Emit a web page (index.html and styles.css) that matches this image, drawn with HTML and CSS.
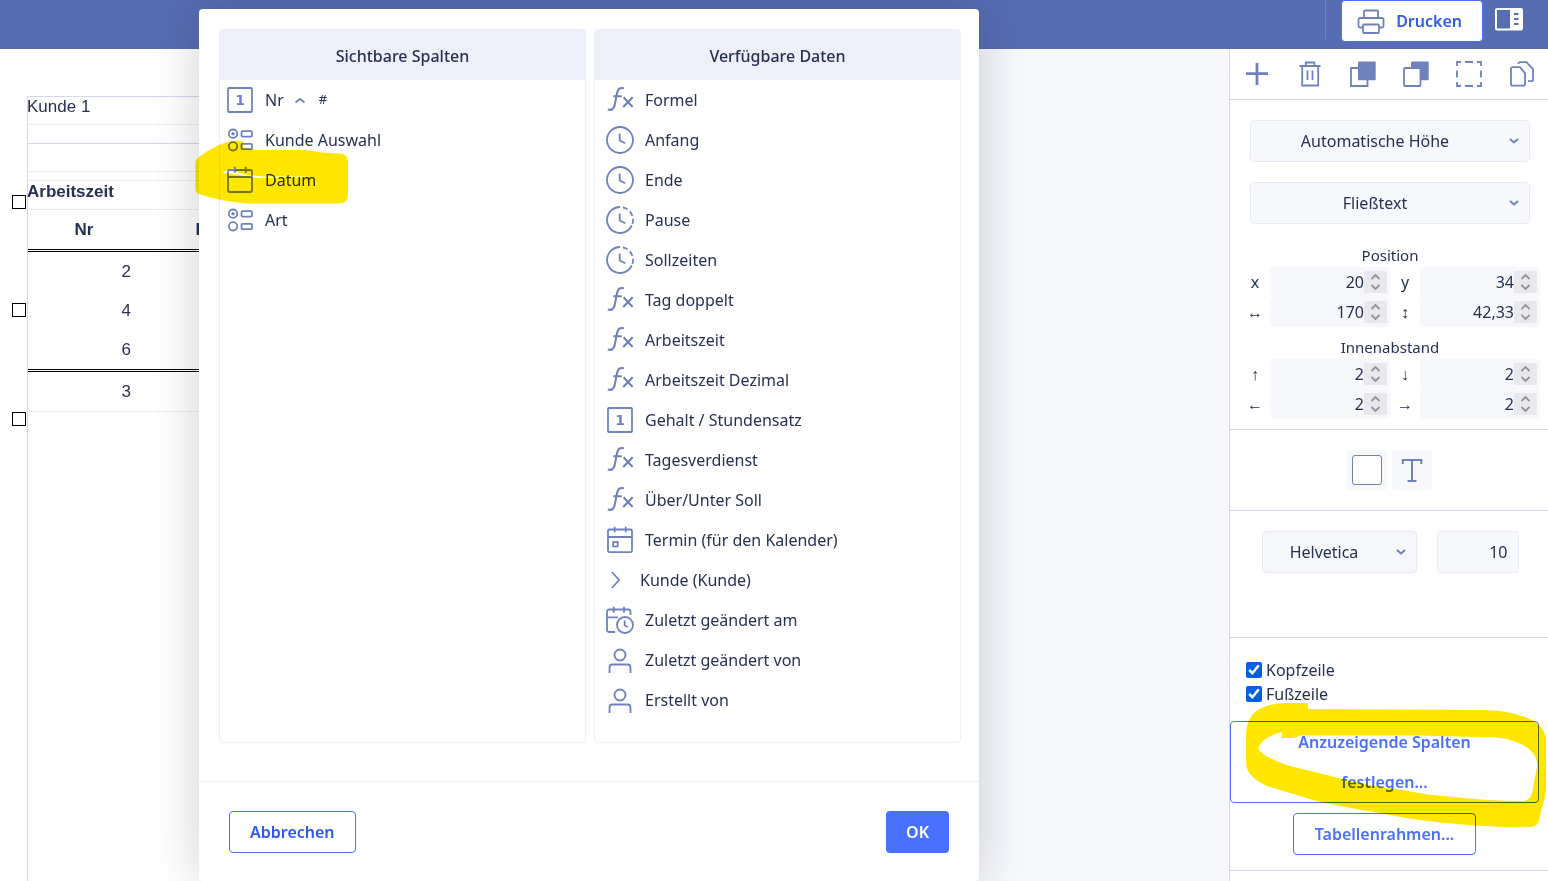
FILE: index.html
```html
<!DOCTYPE html>
<html lang="de">
<head>
    <meta charset="UTF-8">
    <meta name="viewport" content="width=device-width, initial-scale=1.0">
    <title>Druckvorlage</title>
    <link rel="stylesheet" href="styles.css">
</head>
<body>
    <!-- Icons -->
    <svg class="sprite" aria-hidden="true">
        <symbol id="i-number" viewBox="0 0 28 28"><rect x="2" y="2" width="24" height="24" rx="1"/><text x="14" y="19">1</text></symbol>
        <symbol id="i-choice" viewBox="0 0 28 28"><circle cx="7" cy="7.7" r="4.2"/><circle class="solid" cx="7" cy="7.7" r="1.7"/><circle cx="7" cy="20.3" r="4.2"/><rect x="15.5" y="5.2" width="10.5" height="5.4" rx="1"/><rect x="15.5" y="17.8" width="10.5" height="5.4" rx="1"/></symbol>
        <symbol id="i-date" viewBox="0 0 28 28"><rect x="2" y="4" width="24" height="22" rx="1.5"/><path d="M2 11h24M8.7 .8v6M19.7 .8v6"/></symbol>
        <symbol id="i-event" viewBox="0 0 28 28"><rect x="2" y="3.5" width="24" height="22.7" rx="1.5"/><path d="M2 11h24M8.7 .8v5.5M19.7 .8v5.5"/><rect x="7.2" y="16" width="4.5" height="4.5"/></symbol>
        <symbol id="i-formula" viewBox="0 0 28 28"><path stroke-width="2.1" d="M1.8 23.5q5.500 1.600 6.800-4.200L11.200 6.500q1-5.500 6.800-4.300M7.300 10.300h8.500M17.600 11.300l9 9.700M26.700 11.300l-9.400 9.700"/></symbol>
        <symbol id="i-clock" viewBox="0 0 28 28"><circle cx="14" cy="14" r="13"/><path d="M13.700 7.500v7l5.500 2.800"/></symbol>
        <symbol id="i-duration" viewBox="0 0 28 28"><path d="M14 1A13 13 0 1 0 25.800 19.500"/><path d="M14 1A13 13 0 0 1 25.800 19.500" stroke-dasharray="0 3 5 3 5 3 5 4"/><path d="M13.700 7.500v7l5.500 2.800"/></symbol>
        <symbol id="i-next" viewBox="0 0 23 28"><path d="M6 6l7 8-7 8"/></symbol>
        <symbol id="i-changed" viewBox="0 0 28 28"><path d="M9 26H3a2 2 0 0 1-2-2V5.500A2 2 0 0 1 3 3.500h19.500a2 2 0 0 1 2 2V9M1 11.300h11M7.700 .800v6M18 .800v6"/><circle cx="19" cy="19" r="8"/><path d="M18.700 14.500v5l3 1.500"/></symbol>
        <symbol id="i-user" viewBox="0 0 28 28"><circle cx="14" cy="9" r="5.500"/><path d="M3.500 27v-5.500a3 3 0 0 1 3-3h15a3 3 0 0 1 3 3V27"/></symbol>
        <symbol id="i-plus" viewBox="0 0 28 28"><path stroke-width="2.800" d="M14 3v22M3 13.700h22"/></symbol>
        <symbol id="i-trash" viewBox="0 0 28 28"><path d="M3.500 6h21M9.800 6V2.500h8.600V6M6.200 7v18.500h16V7M11.500 10.500V20M16.500 10.500V20"/></symbol>
        <symbol id="i-front" viewBox="0 0 28 28"><path d="M9 8H2v18h16.500v-6"/><rect class="solid" x="9" y="1.500" width="17.700" height="18.700" rx="1"/></symbol>
        <symbol id="i-back" viewBox="0 0 28 28"><rect class="solid" x="9" y="1.500" width="17.700" height="18.700" rx="1"/><rect class="paper-fill" x="2" y="8" width="16.500" height="18" rx="1"/></symbol>
        <symbol id="i-select" viewBox="0 0 28 28"><path d="M2 6V2h4M10 2h8M22 2h4v4M26 10.500v7M26 22v4h-4M18 26h-8M6 26H2v-4M2 17.500v-7"/></symbol>
        <symbol id="i-copy" viewBox="0 0 28 28"><path d="M4.500 7.200h7.500l5 6v11a1.500 1.500 0 0 1-1.500 1.500h-11A1.500 1.500 0 0 1 3 24.200V8.700a1.500 1.500 0 0 1 1.500-1.500zM10.500 4V3.700a1.500 1.500 0 0 1 1.500-1.500h6.500l6.500 7v10.500a1.500 1.500 0 0 1-1.500 1.500H20"/></symbol>
        <symbol id="i-print" viewBox="0 0 28 28"><path d="M6 20.500H3A1.500 1.500 0 0 1 1.500 19v-6.500A1.500 1.500 0 0 1 3 11h22a1.500 1.500 0 0 1 1.500 1.500V19a1.500 1.500 0 0 1-1.500 1.500h-3M7 11V4.500A1 1 0 0 1 8 3.500h12a1 1 0 0 1 1 1V11"/><rect x="6" y="17.500" width="16" height="8.500" rx="1"/></symbol>
        <symbol id="i-panel" viewBox="0 0 28 24"><rect class="solid" x="0" y="1" width="28" height="22.500" rx="2"/><path class="bar" d="M2 3h13v18.500H2z"/><path class="lines" d="M19 7h4.500M19 12h4.500M19 17h4.500"/></symbol>
        <symbol id="i-type" viewBox="0 0 28 28"><path stroke-width="2" d="M4.800 8V4h18.500v4M14 4v21M9.500 25h9"/></symbol>
        <symbol id="i-down" viewBox="0 0 12 12"><path d="M2 4l4 3.500L10 4"/></symbol>
        <symbol id="i-up" viewBox="0 0 12 12"><path d="M1.500 8.500l4.500-3.500L10.500 8.500"/></symbol>
        <symbol id="i-spin" viewBox="0 0 23 22"><path d="M7.500 8l4-4 4 4M7.500 14l4 4 4-4"/></symbol>
    </svg>

    <header>
        <div class="divider"></div>
        <button type="button" class="print-btn"><svg class="icon"><use href="#i-print"/></svg>Drucken</button>
        <button type="button" class="panel-btn" aria-label="Seitenleiste"><svg><use href="#i-panel"/></svg></button>
    </header>

    <main>
        <section class="canvas">
            <div class="page">
                <div class="field customer">Kunde 1</div>
                <div class="field spacer"></div>
                <div class="field block"></div>
                <div class="field gap"></div>
                <div class="field heading">Arbeitszeit</div>
                <table>
                    <thead>
                        <tr><th>Nr</th><th>Kunde</th><th>Datum</th></tr>
                    </thead>
                    <tbody>
                        <tr><td>2</td><td></td><td></td></tr>
                        <tr><td>4</td><td></td><td></td></tr>
                        <tr><td>6</td><td></td><td></td></tr>
                    </tbody>
                    <tfoot>
                        <tr><td>3</td><td></td><td></td></tr>
                    </tfoot>
                </table>
                <span class="handle handle-top"></span>
                <span class="handle handle-middle"></span>
                <span class="handle handle-bottom"></span>
            </div>
        </section>

        <aside>
            <div class="toolbar">
                <button type="button" aria-label="Hinzufügen"><svg class="icon"><use href="#i-plus"/></svg></button>
                <button type="button" aria-label="Löschen"><svg class="icon"><use href="#i-trash"/></svg></button>
                <button type="button" aria-label="Nach vorne"><svg class="icon"><use href="#i-front"/></svg></button>
                <button type="button" aria-label="Nach hinten"><svg class="icon"><use href="#i-back"/></svg></button>
                <button type="button" aria-label="Auswählen"><svg class="icon"><use href="#i-select"/></svg></button>
                <button type="button" aria-label="Kopieren"><svg class="icon"><use href="#i-copy"/></svg></button>
            </div>

            <div class="group layout">
                <div class="select">
                    <select aria-label="Höhe"><option>Automatische Höhe</option></select>
                    <svg class="chevron"><use href="#i-down"/></svg>
                </div>
                <div class="select">
                    <select aria-label="Textart"><option>Fließtext</option></select>
                    <svg class="chevron"><use href="#i-down"/></svg>
                </div>
                <fieldset>
                    <legend>Position</legend>
                    <label for="posX">x</label>
                    <div class="number"><input type="text" id="posX" value="20"><svg><use href="#i-spin"/></svg></div>
                    <label for="posY">y</label>
                    <div class="number"><input type="text" id="posY" value="34"><svg><use href="#i-spin"/></svg></div>
                    <label for="width">↔</label>
                    <div class="number"><input type="text" id="width" value="170"><svg><use href="#i-spin"/></svg></div>
                    <label for="height">↕</label>
                    <div class="number"><input type="text" id="height" value="42,33"><svg><use href="#i-spin"/></svg></div>
                </fieldset>
                <fieldset>
                    <legend>Innenabstand</legend>
                    <label for="padTop">↑</label>
                    <div class="number"><input type="text" id="padTop" value="2"><svg><use href="#i-spin"/></svg></div>
                    <label for="padBottom">↓</label>
                    <div class="number"><input type="text" id="padBottom" value="2"><svg><use href="#i-spin"/></svg></div>
                    <label for="padLeft">←</label>
                    <div class="number"><input type="text" id="padLeft" value="2"><svg><use href="#i-spin"/></svg></div>
                    <label for="padRight">→</label>
                    <div class="number"><input type="text" id="padRight" value="2"><svg><use href="#i-spin"/></svg></div>
                </fieldset>
            </div>

            <div class="group colors">
                <button type="button" aria-label="Hintergrundfarbe"><span class="swatch"></span></button>
                <button type="button" aria-label="Textfarbe"><svg class="icon"><use href="#i-type"/></svg></button>
            </div>

            <div class="group font">
                <div class="select">
                    <select aria-label="Schriftart"><option>Helvetica</option></select>
                    <svg class="chevron"><use href="#i-down"/></svg>
                </div>
                <input type="text" class="font-size" aria-label="Schriftgröße" value="10">
            </div>

            <div class="group table-options">
                <label class="check"><input type="checkbox" checked>Kopfzeile</label>
                <label class="check"><input type="checkbox" checked>Fußzeile</label>
                <button type="button" class="outline-btn wide">Anzuzeigende Spalten<br>festlegen...</button>
                <button type="button" class="outline-btn">Tabellenrahmen...</button>
            </div>
        </aside>
    </main>

    <div class="dialog" role="dialog" aria-label="Spalten festlegen">
        <div class="columns">
            <section class="column visible">
                <h2>Sichtbare Spalten</h2>
                <ul>
                    <li><svg class="icon"><use href="#i-number"/></svg>Nr<svg class="sort"><use href="#i-up"/></svg><span class="hash">#</span></li>
                    <li><svg class="icon"><use href="#i-choice"/></svg>Kunde Auswahl</li>
                    <li><svg class="icon"><use href="#i-date"/></svg>Datum</li>
                    <li><svg class="icon"><use href="#i-choice"/></svg>Art</li>
                </ul>
            </section>
            <section class="column">
                <h2>Verfügbare Daten</h2>
                <ul>
                    <li><svg class="icon"><use href="#i-formula"/></svg>Formel</li>
                    <li><svg class="icon"><use href="#i-clock"/></svg>Anfang</li>
                    <li><svg class="icon"><use href="#i-clock"/></svg>Ende</li>
                    <li><svg class="icon"><use href="#i-duration"/></svg>Pause</li>
                    <li><svg class="icon"><use href="#i-duration"/></svg>Sollzeiten</li>
                    <li><svg class="icon"><use href="#i-formula"/></svg>Tag doppelt</li>
                    <li><svg class="icon"><use href="#i-formula"/></svg>Arbeitszeit</li>
                    <li><svg class="icon"><use href="#i-formula"/></svg>Arbeitszeit Dezimal</li>
                    <li><svg class="icon"><use href="#i-number"/></svg>Gehalt / Stundensatz</li>
                    <li><svg class="icon"><use href="#i-formula"/></svg>Tagesverdienst</li>
                    <li><svg class="icon"><use href="#i-formula"/></svg>Über/Unter Soll</li>
                    <li><svg class="icon"><use href="#i-event"/></svg>Termin (für den Kalender)</li>
                    <li><svg class="icon narrow"><use href="#i-next"/></svg>Kunde (Kunde)</li>
                    <li><svg class="icon"><use href="#i-changed"/></svg>Zuletzt geändert am</li>
                    <li><svg class="icon"><use href="#i-user"/></svg>Zuletzt geändert von</li>
                    <li><svg class="icon"><use href="#i-user"/></svg>Erstellt von</li>
                </ul>
            </section>
        </div>
        <div class="actions">
            <button type="button" class="outline-btn cancel">Abbrechen</button>
            <button type="button" class="ok-btn">OK</button>
        </div>
    </div>

    <!-- Highlighter strokes -->
    <svg class="marker marker-date" viewBox="195 140 154 65" aria-hidden="true">
        <path d="M195.500 165Q195 160 199 157Q212 147 227 142Q236 140 243 141.500L243 148Q255 150 265 150H305Q315 151 322 152.500L340 153.500Q348 154.500 348 161V195Q348 203.500 339 203.500H247Q220 201.500 199 194Q195.500 193 195.500 188ZM222 172.500L235 167.500V171.500L247 175L264 176.500H305V177.500L258 178L236 174.500Z"/>
    </svg>
    <svg class="marker marker-button" viewBox="1245 702 302 126" aria-hidden="true">
        <path d="M1308 703V709L1486 710Q1510 711 1525 717Q1546 725 1546 741V787Q1545 800 1542 807L1539 821Q1537 827 1529 827Q1505 828 1487 826Q1425 823 1380 813Q1350 808 1320 802L1270 787Q1246 778 1246 762V734Q1247 713 1264 707Q1274 703 1285 703ZM1282 732V738H1292Q1296 738 1300 735.500H1420L1497 737.500Q1512 739 1523 745Q1538 753 1537 767L1532 793Q1530 801 1522 801Q1490 801 1453 797Q1425 795 1403 790Q1365 786 1327 775L1290 766Q1262 757 1258 748Q1264 736 1282 732Z"/>
    </svg>
</body>
</html>
```
FILE: styles.css
```css
* {
    margin: 0;
    padding: 0;
    box-sizing: border-box;
}

body {
    font-family: "Noto Sans", sans-serif;
    font-size: 16px;
    color: #263052;
    background-color: #f6f8fc;
    height: 100vh;
    overflow: hidden;
    display: flex;
    flex-direction: column;
    position: relative;
}

button,
input,
select {
    font: inherit;
    color: inherit;
}

button {
    background: none;
    border: none;
    cursor: pointer;
}

svg {
    fill: none;
    stroke: #6f82bb;
    stroke-width: 1.8;
    flex-shrink: 0;
}

.sprite {
    display: none;
}

.icon {
    width: 28px;
    height: 28px;
    display: block;
}

.solid {
    fill: #6f82bb;
    stroke: none;
}

.paper-fill {
    fill: #fff;
}

symbol text {
    fill: #6f82bb;
    stroke: none;
    font-family: "DejaVu Sans", sans-serif;
    font-size: 14px;
    font-weight: bold;
    text-anchor: middle;
}

header {
    height: 49px;
    flex-shrink: 0;
    background-color: #566db1;
    display: flex;
    justify-content: flex-end;
    padding: 0 25px 7px 0;
}

.divider {
    width: 1px;
    height: 39px;
    margin-right: 15px;
    background-color: #6f82bb;
}

.print-btn {
    height: 42px;
    display: flex;
    align-items: center;
    gap: 11px;
    padding: 0 20px 0 15px;
    background-color: #fff;
    border: 1px solid #4a70ff;
    border-radius: 4px;
    color: #2f59f0;
    font-weight: 600;
    margin-right: 12px;
}

.panel-btn {
    display: flex;
    align-items: center;
    padding-bottom: 4px;
}

.panel-btn svg {
    width: 28px;
    height: 24px;
}

#i-panel .solid {
    fill: #fff;
}

#i-panel .bar {
    fill: #566db1;
    stroke: none;
}

#i-panel .lines {
    stroke: #566db1;
}

main {
    flex: 1;
    min-height: 0;
    display: flex;
}

/* Canvas */
.canvas {
    flex: 1;
    overflow: hidden;
}

.page {
    position: relative;
    width: 800px;
    height: 100%;
    padding: 47px 0 0 27px;
    background-color: #fff;
    font-family: "Liberation Sans", Arial, sans-serif;
    font-size: 17px;
}

.field {
    border-left: 1px solid #d3d8e8;
    border-bottom: 1px dotted #d8dae2;
}

.customer {
    height: 29px;
    border-top: 1px solid #d3d8e8;
    line-height: 20px;
    text-indent: -1px;
}

.spacer {
    height: 19px;
    border-bottom: 1px solid #d3d8e8;
}

.block {
    height: 28px;
}

.gap {
    height: 9px;
}

.heading {
    height: 29px;
    line-height: 22px;
    font-weight: bold;
    text-indent: -1px;
}

table {
    width: 100%;
    border-collapse: separate;
    border-spacing: 0;
    table-layout: fixed;
    border-left: 1px solid #d3d8e8;
    border-bottom: 1px dotted #d8dae2;
}

th,
td {
    height: 39px;
}

th {
    height: 42px;
    border-bottom: 3px double #000;
}

th:nth-child(1) {
    width: 112px;
}

th:nth-child(2) {
    width: 164px;
}

td {
    text-align: right;
    padding-right: 9px;
}

tbody tr:last-child td {
    height: 42px;
    border-bottom: 3px double #000;
}

.page::after {
    content: "";
    display: block;
    height: 100%;
    border-left: 1px solid #d3d8e8;
}

.handle {
    position: absolute;
    left: 12px;
    width: 14px;
    height: 14px;
    border: 1px solid #000;
    background-color: #fff;
}

.handle-top {
    top: 146px;
}

.handle-middle {
    top: 254px;
}

.handle-bottom {
    top: 363px;
}

/* Sidebar */
aside {
    width: 319px;
    background-color: #fff;
    border-left: 1px solid #d3d6e6;
}

.toolbar {
    display: grid;
    grid-template-columns: repeat(6, 1fr);
    height: 51px;
    border-bottom: 1px solid #d3d6e6;
}

.toolbar button {
    display: flex;
    align-items: center;
    justify-content: center;
}

.group {
    border-bottom: 1px solid #d3d6e6;
}

.layout {
    padding: 20px 0 10px;
}

.layout .select {
    margin: 0 18px 20px 20px;
}

.select {
    display: grid;
    align-items: center;
}

.select > * {
    grid-area: 1 / 1;
}

.select select {
    appearance: none;
    width: 100%;
    height: 42px;
    padding: 0 40px 0 10px;
    background-color: #f6f8fc;
    border: 1px solid #e7eaf3;
    border-radius: 4px;
    text-align-last: center;
}

.chevron {
    width: 12px;
    height: 12px;
    justify-self: end;
    margin-right: 10px;
    stroke-width: 2;
    pointer-events: none;
}

fieldset {
    border: none;
    display: grid;
    grid-template-columns: 30px 120px 30px 120px;
    justify-content: center;
    align-items: center;
    padding-left: 2px;
}

fieldset + fieldset {
    margin-top: 9px;
}

legend {
    width: 100%;
    font-size: 15px;
    line-height: 23px;
    text-align: center;
}

fieldset label {
    text-align: center;
}

.number {
    display: flex;
    align-items: center;
    height: 30px;
    padding-right: 3px;
    background-color: #f6f8fc;
    border-radius: 4px;
}

.number input {
    flex: 1;
    min-width: 0;
    background: none;
    border: none;
    text-align: right;
}

.number svg {
    width: 23px;
    height: 22px;
    background-color: #e8e8ed;
    stroke: #92929f;
}

.colors {
    display: flex;
    justify-content: center;
    gap: 5px;
    padding: 20px 0;
}

.colors button {
    width: 40px;
    height: 40px;
    display: flex;
    align-items: center;
    justify-content: center;
    background-color: #f6f8fc;
    border-radius: 3px;
}

.swatch {
    width: 30px;
    height: 30px;
    background-color: #fff;
    border: 1px solid #6f82bb;
    border-radius: 3px;
}

.font {
    display: flex;
    justify-content: center;
    gap: 20px;
    padding: 20px 0 64px 2px;
}

.font .select {
    width: 155px;
}

.font-size {
    width: 82px;
    height: 42px;
    padding: 0 10px;
    background-color: #f6f8fc;
    border: 1px solid #e7eaf3;
    border-radius: 4px;
    text-align: right;
}

.table-options {
    display: flex;
    flex-direction: column;
    align-items: center;
    padding: 20px 9px 15px 0;
}

.check {
    align-self: flex-start;
    display: flex;
    align-items: center;
    gap: 4px;
    height: 24px;
    margin-left: 16px;
}

.check input {
    width: 16px;
    height: 16px;
    accent-color: #0060df;
}

.outline-btn {
    padding: 0 21px;
    background-color: #fff;
    border: 1px solid #4a70ff;
    border-radius: 4px;
    color: #4a70ff;
    font-weight: 600;
    line-height: 40px;
}

.wide {
    width: 100%;
    margin: 15px 0 10px;
}

/* Column dialog */
.dialog {
    position: absolute;
    top: 9px;
    left: 199px;
    width: 780px;
    background-color: #fff;
    border-radius: 4px;
    box-shadow: 0 0 50px rgba(20, 26, 50, 0.2);
}

.columns {
    display: grid;
    grid-template-columns: 1fr 1fr;
    gap: 8px;
    padding: 20px 18px 38px 20px;
}

.column {
    min-height: 714px;
    border: 1px solid #edeff8;
    border-radius: 4px;
}

.column h2 {
    height: 50px;
    line-height: 52px;
    background-color: #edf0f9;
    font-size: 16px;
    font-weight: 500;
    text-align: center;
}

.column ul {
    list-style: none;
    padding-left: 11px;
}

.visible ul {
    padding-left: 6px;
}

.column li {
    display: flex;
    align-items: center;
    height: 40px;
}

.column .icon {
    margin-right: 11px;
}

.column .narrow {
    width: 23px;
}

.sort {
    width: 12px;
    height: 12px;
    margin: 0 13px 0 10px;
}

.hash {
    font-size: 13px;
    padding-bottom: 2px;
}

.actions {
    display: flex;
    justify-content: space-between;
    padding: 29px 30px 28px;
    border-top: 1px solid #edeef4;
}

.cancel {
    padding: 0 20px;
    color: #2f59e8;
}

.ok-btn {
    height: 42px;
    padding: 0 20px;
    background-color: #4a70ff;
    border-radius: 4px;
    color: #fff;
    font-weight: 600;
}

/* Highlighter */
.marker {
    position: absolute;
    mix-blend-mode: multiply;
    pointer-events: none;
    fill: #ffe600;
    fill-rule: evenodd;
    stroke: none;
}

.marker-date {
    top: 140px;
    left: 195px;
    width: 154px;
    height: 65px;
}

.marker-button {
    top: 702px;
    right: 1px;
    width: 302px;
    height: 126px;
}
```
